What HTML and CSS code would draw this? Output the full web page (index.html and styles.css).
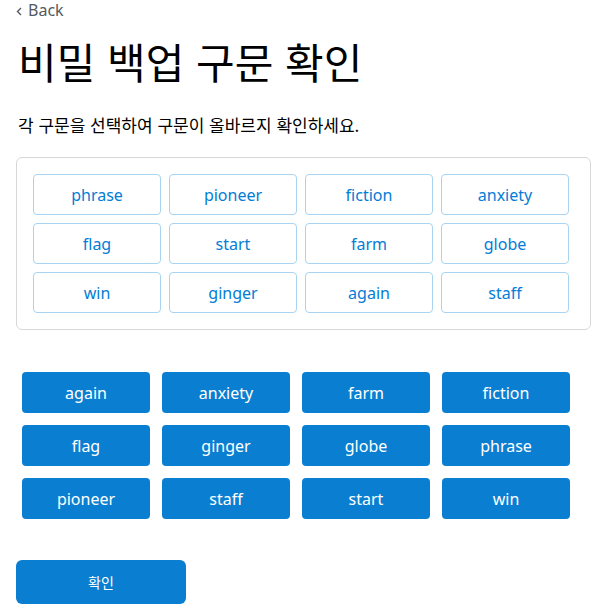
FILE: index.html
```html
<!DOCTYPE html>
<html lang="ko">
<head>
<meta charset="utf-8">
<title>비밀 백업 구문 확인</title>
<link rel="stylesheet" href="styles.css">
</head>
<body>
<div class="page">
  <a class="back" href="#"><svg class="chev" width="6" height="9" viewBox="0 0 6 9"><path d="M5 1 L1.5 4.5 L5 8" fill="none" stroke="#535a61" stroke-width="1.4"/></svg><span>Back</span></a>
  <h1 class="title">비밀 백업 구문 확인</h1>
  <p class="subtitle">각 구문을 선택하여 구문이 올바르지 확인하세요.</p>
  <div class="board">
    <div class="chip">phrase</div>
    <div class="chip">pioneer</div>
    <div class="chip">fiction</div>
    <div class="chip">anxiety</div>
    <div class="chip">flag</div>
    <div class="chip">start</div>
    <div class="chip">farm</div>
    <div class="chip">globe</div>
    <div class="chip">win</div>
    <div class="chip">ginger</div>
    <div class="chip">again</div>
    <div class="chip">staff</div>
  </div>
  <div class="words">
    <button class="word">again</button>
    <button class="word">anxiety</button>
    <button class="word">farm</button>
    <button class="word">fiction</button>
    <button class="word">flag</button>
    <button class="word">ginger</button>
    <button class="word">globe</button>
    <button class="word">phrase</button>
    <button class="word">pioneer</button>
    <button class="word">staff</button>
    <button class="word">start</button>
    <button class="word">win</button>
  </div>
  <button class="confirm">확인</button>
</div>
</body>
</html>
```

FILE: styles.css
```css
html, body {
  margin: 0;
  padding: 0;
  background: #ffffff;
}
body {
  font-family: "Noto Sans", "Noto Sans CJK KR", sans-serif;
  color: #24272a;
}
.page {
  padding: 0 0 0 16px;
  width: 575px;
}
.back {
  display: flex;
  align-items: center;
  gap: 6px;
  height: 21px;
  font-size: 16px;
  line-height: 21px;
  color: #535a61;
  text-decoration: none;
}
.chev {
  display: block;
  margin-top: 1px;
}
.title {
  margin: 11px 0 0 2px;
  font-family: "Noto Sans CJK KR", sans-serif;
  font-weight: 400;
  font-size: 42px;
  line-height: 58px;
  color: #000000;
}
.subtitle {
  margin: 23px 0 0 2px;
  font-family: "Noto Sans CJK KR", sans-serif;
  font-size: 17px;
  line-height: 24px;
  color: #000000;
}
.board {
  margin-top: 20px;
  box-sizing: border-box;
  width: 575px;
  border: 1px solid #d6d9dc;
  border-radius: 6px;
  padding: 16px;
  display: grid;
  grid-template-columns: repeat(4, 128px);
  column-gap: 8px;
  row-gap: 8px;
}
.chip {
  box-sizing: border-box;
  height: 41px;
  border: 1px solid #a8d4f2;
  border-radius: 4px;
  display: flex;
  align-items: center;
  justify-content: center;
  font-size: 16px;
  color: #037dd6;
}
.words {
  margin: 42px 0 0 6px;
  display: grid;
  grid-template-columns: repeat(4, 128px);
  column-gap: 12px;
  row-gap: 12px;
}
.word {
  height: 41px;
  border: none;
  border-radius: 4px;
  background: #0a7fd1;
  color: #ffffff;
  font-family: "Noto Sans", sans-serif;
  font-size: 16px;
  padding: 0;
}
.confirm {
  display: block;
  margin-top: 41px;
  width: 170px;
  height: 44px;
  border: none;
  border-radius: 6px;
  background: #0a7fd1;
  color: #ffffff;
  font-family: "Noto Sans CJK KR", sans-serif;
  font-size: 14px;
  padding: 0;
}
```
